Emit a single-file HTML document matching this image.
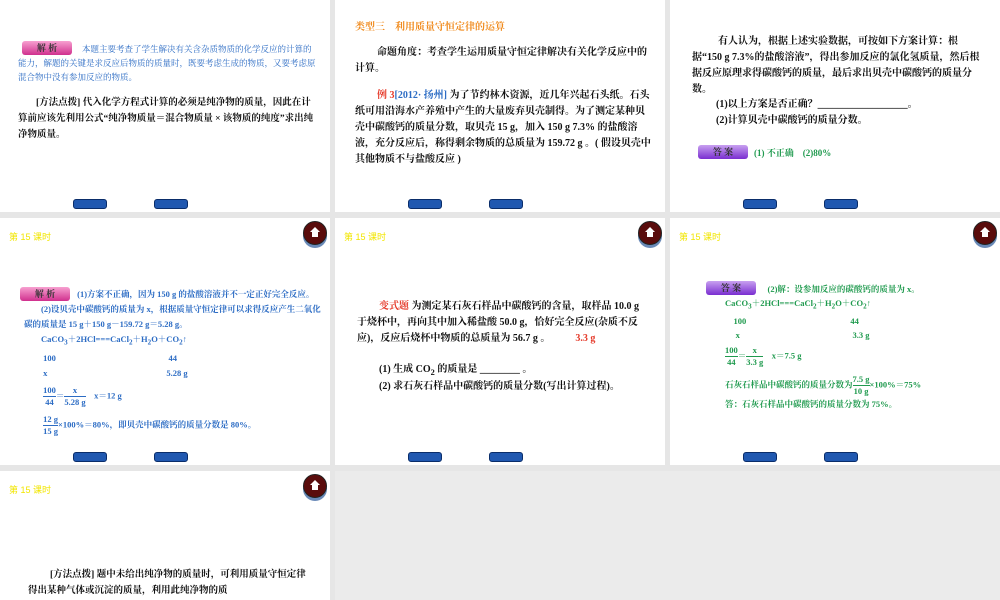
<!DOCTYPE html><html><head><meta charset="utf-8"><style>
body{margin:0;width:1000px;height:600px;background:#e6e6e6;overflow:hidden;position:relative;font-family:"Liberation Serif","Noto Serif CJK SC",serif;}
.s{position:absolute;width:330px;background:#fff;overflow:hidden}
.t{position:absolute;font-size:10px;line-height:16px;color:#111;font-weight:bold}
.b{color:#2c6cc4}.g{color:#1f9a4e}.r{color:#e53a2a}.o{color:#f08a1c}
.hdr{position:absolute;left:9px;top:12px;font-size:9px;color:#f2e600;font-family:"Liberation Sans","Noto Sans CJK SC",sans-serif}
.home{position:absolute;right:3px;top:3px;width:22px;height:22px;border-radius:50%;background:#5a0c0c;border:1px solid #222;box-shadow:0 3px 0 #6a8ab8}
.home:after{content:"";position:absolute;left:6px;top:5px;border:5px solid transparent;border-bottom:5px solid #fff;border-top:0;width:0}
.home:before{content:"";position:absolute;left:8px;top:10px;width:6px;height:5px;background:#fff}
.btn{position:absolute;width:32px;height:8px;border-radius:3px;background:#2058b0;border:1px solid #0a2d6a;bottom:3px}
.tag{position:absolute;width:50px;height:14px;border-radius:3px;color:#333;font-size:9px;text-align:center;line-height:14px;font-weight:bold}
.pink{background:linear-gradient(#f7a0d0,#d0308e)}.pur{background:linear-gradient(#c8a0f0,#7a2ed0)}
.f{display:inline-block;vertical-align:middle;text-align:center;line-height:11px}
.f span{display:block}.f span:first-child{border-bottom:1px solid currentColor}
</style></head><body>
<div class="s" style="left:0;top:0;height:212px">
<div class="tag pink" style="left:22px;top:41px">解 析</div>
<div class="t b" style="left:18px;top:42px;width:300px;font-size:8.5px;line-height:14px;font-weight:normal;text-indent:64px">本题主要考查了学生解决有关含杂质物质的化学反应的计算的能力，解题的关键是求反应后物质的质量时，既要考虑生成的物质，又要考虑原混合物中没有参加反应的物质。</div>
<div class="t" style="left:18px;top:95px;width:298px;font-size:9.5px;text-indent:18px">[方法点拨] 代入化学方程式计算的必须是纯净物的质量，因此在计算前应该先利用公式“纯净物质量＝混合物质量 × 该物质的纯度”求出纯净物质量。</div>
<div class="btn" style="left:73px"></div><div class="btn" style="left:154px"></div></div>
<div class="s" style="left:335px;top:0;height:212px">
<div class="t o" style="left:20px;top:20px">类型三　利用质量守恒定律的运算</div>
<div class="t" style="left:20px;top:45px;width:292px;text-indent:22px">命题角度：考查学生运用质量守恒定律解决有关化学反应中的计算。</div>
<div class="t" style="left:20px;top:88px;width:296px;text-indent:22px"><span class="r">例 3</span><span class="b">[2012· 扬州]</span> 为了节约林木资源，近几年兴起石头纸。石头纸可用沿海水产养殖中产生的大量废弃贝壳制得。为了测定某种贝壳中碳酸钙的质量分数，取贝壳 15 g，加入 150 g 7.3% 的盐酸溶液，充分反应后，称得剩余物质的总质量为 159.72 g 。( 假设贝壳中其他物质不与盐酸反应 )</div>
<div class="btn" style="left:73px"></div><div class="btn" style="left:154px"></div></div>
<div class="s" style="left:670px;top:0;height:212px">
<div class="t" style="left:22px;top:34px;width:288px;text-indent:26px">有人认为，根据上述实验数据，可按如下方案计算：根据“150 g 7.3%的盐酸溶液”，得出参加反应的氯化氢质量，然后根据反应原理求得碳酸钙的质量，最后求出贝壳中碳酸钙的质量分数。</div>
<div class="t" style="left:46px;top:97px">(1)以上方案是否正确？__________________。</div>
<div class="t" style="left:46px;top:113px">(2)计算贝壳中碳酸钙的质量分数。</div>
<div class="tag pur" style="left:28px;top:145px">答 案</div>
<div class="t g" style="left:84px;top:145px;font-size:9px">(1) 不正确　(2)80%</div>
<div class="btn" style="left:73px"></div><div class="btn" style="left:154px"></div></div>
<div class="s" style="left:0;top:218px;height:247px"><div class="hdr">第 15 课时</div><div class="home"></div>
<div class="tag pink" style="left:20px;top:69px">解 析</div>
<div class="t b" style="left:24px;top:69px;width:300px;font-size:8.5px;line-height:15px">　　　　　　 (1)方案不正确，因为 150 g 的盐酸溶液并不一定正好完全反应。<br>　　(2)设贝壳中碳酸钙的质量为 x，根据质量守恒定律可以求得反应产生二氧化碳的质量是 15 g＋150 g－159.72 g＝5.28 g。<br>　　CaCO<sub>3</sub>＋2HCl===CaCl<sub>2</sub>＋H<sub>2</sub>O＋CO<sub>2</sub>↑<br>　　 100　　　　　　　　　　　　　 44<br>　　 x　　　　　　　　　　　　　　5.28 g<br><div style="height:4px"></div>　　 <span class="f"><span>100</span><span>44</span></span>＝<span class="f"><span>x</span><span>5.28 g</span></span>　x＝12 g<br><div style="height:6px"></div>　　 <span class="f"><span>12 g</span><span>15 g</span></span>×100%＝80%，即贝壳中碳酸钙的质量分数是 80%。</div>
<div class="btn" style="left:73px"></div><div class="btn" style="left:154px"></div></div>
<div class="s" style="left:335px;top:218px;height:247px"><div class="hdr">第 15 课时</div><div class="home"></div>
<div class="t" style="left:22px;top:81px;width:282px;text-indent:22px"><span class="r">变式题</span> 为测定某石灰石样品中碳酸钙的含量，取样品 10.0 g 于烧杯中，再向其中加入稀盐酸 50.0 g，恰好完全反应(杂质不反应)，反应后烧杯中物质的总质量为 56.7 g 。　　　<span class="r">3.3 g</span></div>
<div class="t" style="left:44px;top:144px">(1) 生成 CO<sub>2</sub> 的质量是 ________ 。</div>
<div class="t" style="left:22px;top:161px;width:286px;text-indent:22px">(2) 求石灰石样品中碳酸钙的质量分数(写出计算过程)。</div>
<div class="btn" style="left:73px"></div><div class="btn" style="left:154px"></div></div>
<div class="s" style="left:670px;top:218px;height:247px"><div class="hdr">第 15 课时</div><div class="home"></div>
<div class="tag pur" style="left:36px;top:63px">答 案</div>
<div class="t g" style="left:55px;top:64px;width:270px;font-size:8.5px;line-height:14px">　　　　　(2)解：设参加反应的碳酸钙的质量为 x。<br>CaCO<sub>3</sub>＋2HCl===CaCl<sub>2</sub>＋H<sub>2</sub>O＋CO<sub>2</sub>↑<br>　100　　　　　　　　　　　　 44<br>　 x　　　　　　　　　　　　　 3.3 g<br><div style="height:3px"></div><span class="f"><span>100</span><span>44</span></span>＝<span class="f"><span>x</span><span>3.3 g</span></span>　x＝7.5 g<br><div style="height:6px"></div>石灰石样品中碳酸钙的质量分数为<span class="f"><span>7.5 g</span><span>10 g</span></span>×100%＝75%<br>答：石灰石样品中碳酸钙的质量分数为 75%。</div>
<div class="btn" style="left:73px"></div><div class="btn" style="left:154px"></div></div>
<div class="s" style="left:0;top:471px;height:129px"><div class="hdr">第 15 课时</div><div class="home"></div>
<div class="t" style="left:28px;top:96px;width:280px;text-indent:22px;font-size:9.5px;line-height:16px">[方法点拨] 题中未给出纯净物的质量时，可利用质量守恒定律得出某种气体或沉淀的质量，利用此纯净物的质</div></div>
<div style="position:absolute;left:335px;top:471px;width:665px;height:129px;background:#ebebeb"></div>
</body></html>
